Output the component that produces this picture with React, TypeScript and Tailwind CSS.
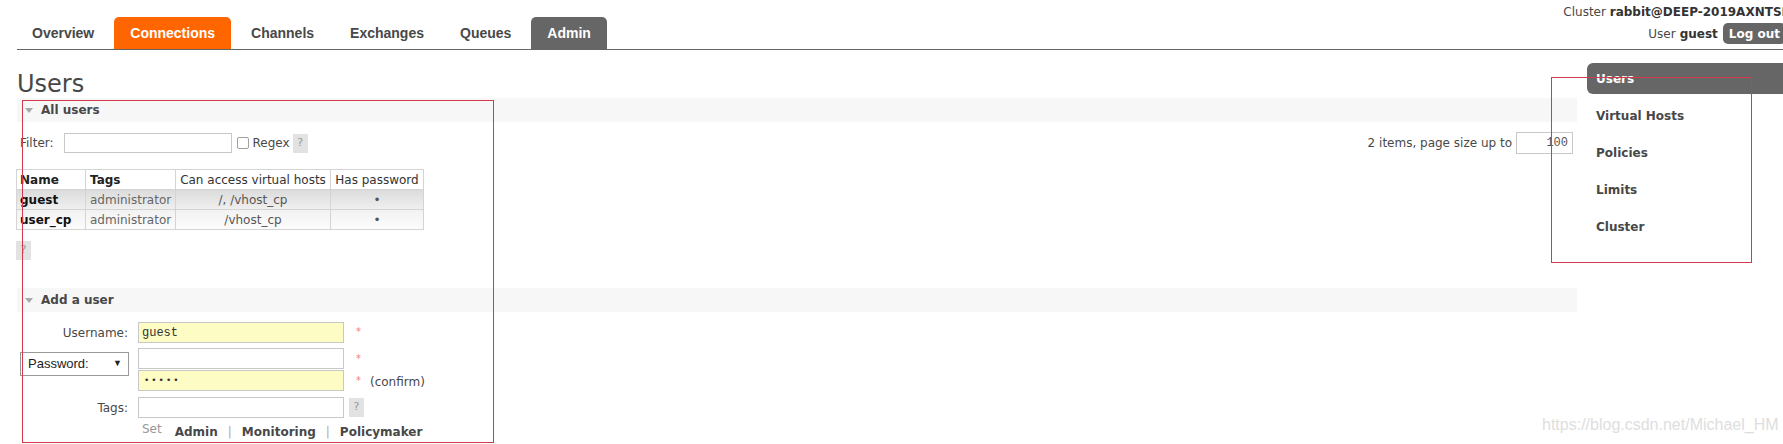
import React from 'react';

const tabs = [
  { label: 'Overview', style: 'text-[#484848]' },
  { label: 'Connections', style: 'bg-[#ff6600] text-white' },
  { label: 'Channels', style: 'text-[#484848]' },
  { label: 'Exchanges', style: 'text-[#484848]' },
  { label: 'Queues', style: 'text-[#484848]' },
  { label: 'Admin', style: 'bg-[#666] text-white' },
];

const navItems = ['Users', 'Virtual Hosts', 'Policies', 'Limits', 'Cluster'];

const users = [
  { name: 'guest', tags: 'administrator', vhosts: '/, /vhost_cp', row: 'bg-gradient-to-b from-[#dcdcdc] to-[#f0f0f0]' },
  { name: 'user_cp', tags: 'administrator', vhosts: '/vhost_cp', row: 'bg-gradient-to-b from-[#f2f2f2] to-[#fcfcfc]' },
];

function SectionBar({ title, className }: { title: string; className?: string }) {
  return (
    <div className={`h-[24px] bg-[#f7f7f7] flex items-center pl-[8px] font-bold text-[#484848] ${className ?? ''}`}>
      <span className="w-0 h-0 border-l-[4px] border-r-[4px] border-t-[5px] border-l-transparent border-r-transparent border-t-[#a8a8a8]" />
      <span className="ml-[8px]">{title}</span>
    </div>
  );
}

function Help({ className }: { className?: string }) {
  return (
    <span className={`w-[15px] h-[19px] flex items-center justify-center bg-[#e2e2e2] text-[#999] text-[11px] ${className ?? ''}`}>?</span>
  );
}

function Star({ className }: { className?: string }) {
  return <span className={`text-[10px] leading-none text-[#f08080] ${className ?? ''}`}>*</span>;
}

export default function App() {
  return (
    <div className="relative w-[1783px] h-[444px] overflow-hidden bg-white pl-[17px] text-[12px] text-[#484848] font-['DejaVu_Sans',sans-serif]">
      {/* header */}
      <header className="flex justify-between h-[50px] border-b border-[#666]">
        <nav className="flex self-end gap-[4px] -ml-px font-['Liberation_Sans',sans-serif] text-[14px] font-bold">
          {tabs.map((t) => (
            <a key={t.label} className={`h-[32px] px-4 flex items-center rounded-t-[5px] ${t.style}`}>
              {t.label}
            </a>
          ))}
        </nav>
        <div className="flex flex-col items-end pt-[4px] -mr-[3px] whitespace-nowrap">
          <div className="leading-[16px]">
            Cluster <b className="text-[#333]">rabbit@DEEP-2019AXNTSI</b>
          </div>
          <div className="mt-[3px] h-[21px] flex items-center">
            User <b className="ml-[4px] text-[#333]">guest</b>
            <button className="ml-[5px] h-[21px] px-[6px] rounded-[5px] bg-[#666] text-white font-bold">Log out</button>
          </div>
        </div>
      </header>

      <div className="flex">
        <main className="w-[1560px]">
          <h1 className="mt-[22px] text-[24px] leading-[25px] font-normal text-[#484848]">Users</h1>

          <SectionBar title="All users" className="mt-[1px]" />

          <div className="mt-[10px] h-[22px] flex items-center justify-between">
            <div className="flex items-center">
              <span className="ml-[3px]">Filter:</span>
              <span className="ml-[10px] w-[168px] h-[20px] border border-[#c8c8c8] bg-white" />
              <span className="ml-[5px] w-[12px] h-[12px] border border-[#a0a0a0] bg-white rounded-[2px]" />
              <span className="ml-[4px]">Regex</span>
              <Help className="ml-[3px]" />
            </div>
            <div className="flex items-center mr-[4px]">
              <span>2 items, page size up to</span>
              <span className="ml-[4px] w-[57px] h-[22px] border border-[#c8c8c8] flex items-center justify-end pr-[4px] font-['Liberation_Mono',monospace] text-[12px] text-[#555]">100</span>
            </div>
          </div>

          <table className="mt-[15px] -ml-px border-collapse table-fixed w-[407px]">
            <colgroup>
              <col className="w-[69px]" />
              <col className="w-[90px]" />
              <col className="w-[155px]" />
              <col className="w-[93px]" />
            </colgroup>
            <thead>
              <tr className="h-[20px] bg-white">
                <th className="border border-[#d4d4d4] px-[3px] text-left font-bold text-[#222]">Name</th>
                <th className="border border-[#d4d4d4] px-[4px] text-left font-bold text-[#222]">Tags</th>
                <th className="border border-[#d4d4d4] px-[4px] text-center font-normal text-[#333]">Can access virtual hosts</th>
                <th className="border border-[#d4d4d4] px-[4px] text-center font-normal text-[#333]">Has password</th>
              </tr>
            </thead>
            <tbody>
              {users.map((u) => (
                <tr key={u.name} className={`h-[20px] ${u.row}`}>
                  <td className="border border-[#d4d4d4] px-[3px] font-bold text-[#111]">{u.name}</td>
                  <td className="border border-[#d4d4d4] px-[4px] text-[#666]">{u.tags}</td>
                  <td className="border border-[#d4d4d4] px-[4px] text-center text-[#555]">{u.vhosts}</td>
                  <td className="border border-[#d4d4d4] px-[4px] text-center text-[#555]">•</td>
                </tr>
              ))}
            </tbody>
          </table>

          <Help className="mt-[11px] -ml-px w-[14px]" />

          <SectionBar title="Add a user" className="mt-[28px]" />

          {/* form */}
          <div className="mt-[10px] flex items-center">
            <span className="w-[111px] text-right">Username:</span>
            <span className="ml-[10px] w-[206px] h-[21px] border border-[#c8c8c8] bg-[#fcfcc4] pl-[3px] flex items-center font-['Liberation_Mono',monospace] text-[12px] text-[#333]">guest</span>
            <Star className="ml-[12px] self-start mt-[5px]" />
          </div>

          <div className="mt-[5px] flex items-start">
            <div className="ml-[3px] mt-[4px] w-[109px] h-[24px] border border-[#999] bg-white flex items-center justify-between pl-[7px] pr-[6px] font-['Liberation_Sans',sans-serif] text-[13px] text-[#222]">
              <span>Password:</span>
              <span className="text-[9px]">▼</span>
            </div>
            <div className="ml-[9px] flex flex-col gap-[1px]">
              <div className="flex items-start">
                <span className="w-[206px] h-[21px] border border-[#c8c8c8] bg-white" />
                <Star className="ml-[12px] mt-[6px]" />
              </div>
              <div className="flex items-start">
                <span className="w-[206px] h-[21px] border border-[#c8c8c8] bg-[#fcfcc4] pl-[5px] flex items-center text-[9px] tracking-[2px] text-[#333]">•••••</span>
                <Star className="ml-[12px] mt-[6px]" />
                <span className="ml-[9px] mt-[3px]">(confirm)</span>
              </div>
            </div>
          </div>

          <div className="mt-[6px] flex items-center">
            <span className="w-[111px] text-right">Tags:</span>
            <span className="ml-[10px] w-[206px] h-[21px] border border-[#c8c8c8] bg-white" />
            <Help className="ml-[5px] w-[14px]" />
          </div>

          <div className="mt-[5px] ml-[125px] flex items-center">
            <span className="text-[#999] -mt-[6px]">Set</span>
            <b className="ml-[13px]">Admin</b>
            <span className="mx-[10px] text-[#aaa]">|</span>
            <b>Monitoring</b>
            <span className="mx-[10px] text-[#aaa]">|</span>
            <b>Policymaker</b>
          </div>
        </main>

        <aside className="ml-[10px] flex-1 mt-[13px] flex flex-col gap-[6px] font-bold">
          {navItems.map((n, i) => (
            <a
              key={n}
              className={`h-[31px] flex items-center pl-[9px] ${i === 0 ? 'bg-[#666] text-white rounded-l-[6px]' : 'text-[#484848]'}`}
            >
              {n}
            </a>
          ))}
        </aside>
      </div>

      {/* annotation boxes */}
      <div className="absolute left-[22px] top-[100px] w-[472px] h-[343px] border border-[#d23a4e] pointer-events-none" />
      <div className="absolute left-[1551px] top-[77px] w-[201px] h-[186px] border border-[#d23a4e] pointer-events-none" />

      {/* watermark */}
      <div className="absolute left-[1542px] top-[413px] font-['Liberation_Sans',sans-serif] text-[16px] text-[#dedede]">
        https://blog.csdn.net/Michael_HM
      </div>
    </div>
  );
}
